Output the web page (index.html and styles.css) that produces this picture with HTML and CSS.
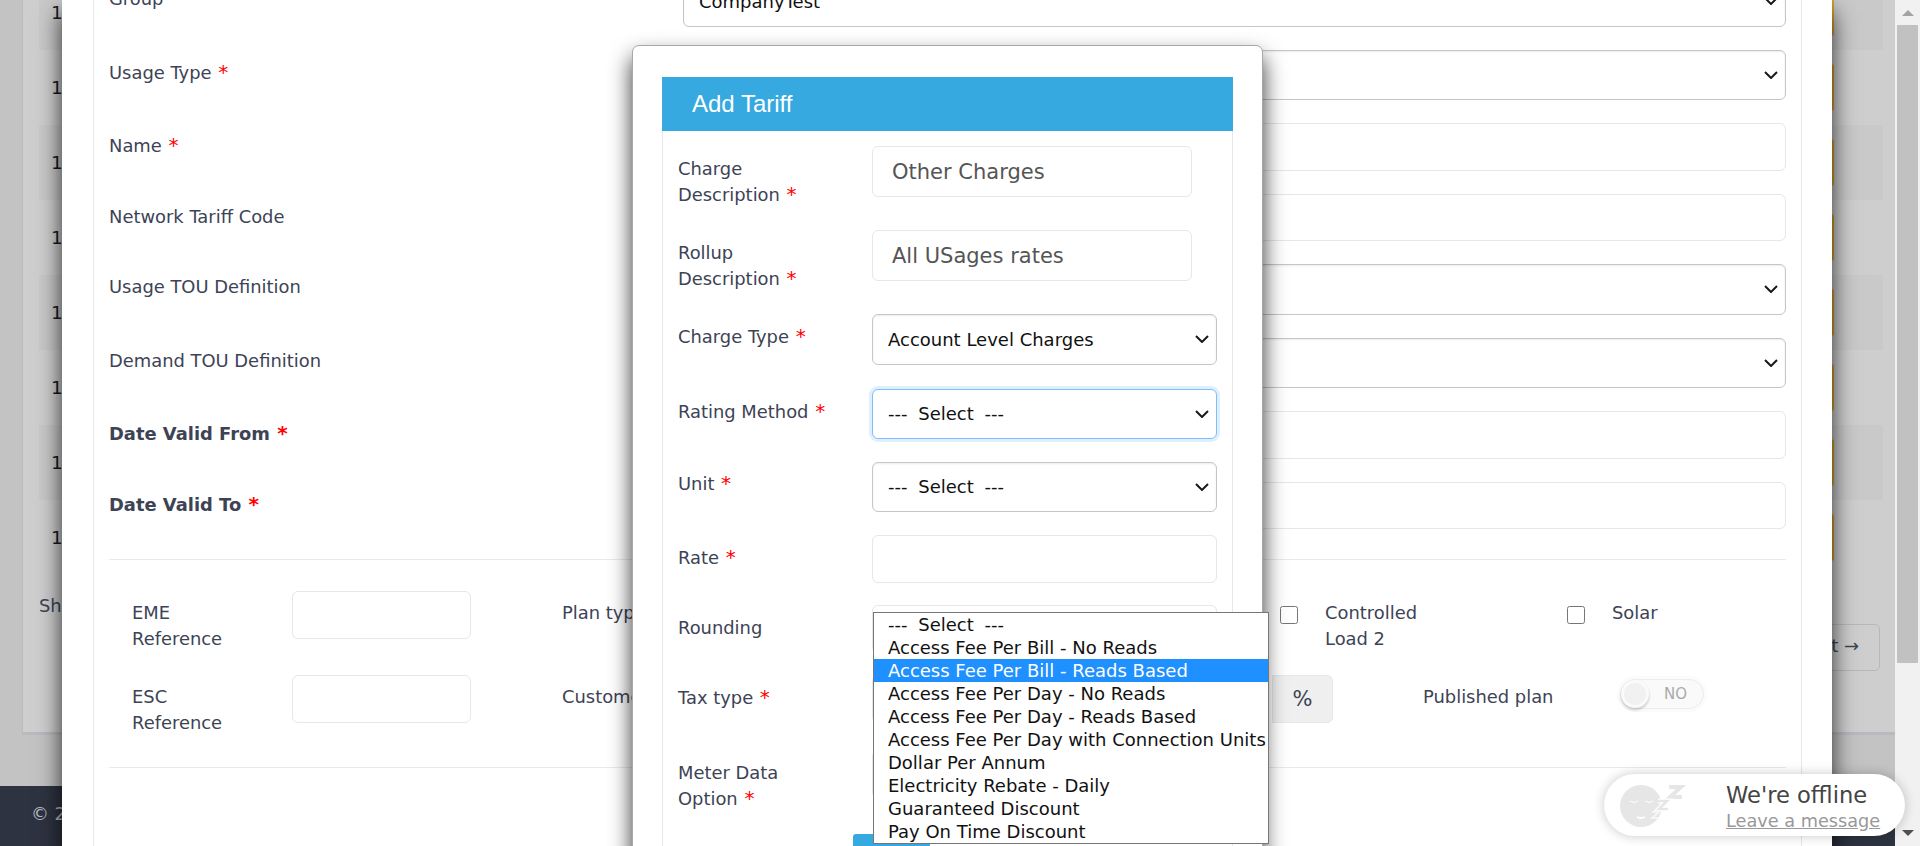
FILE: index.html
```html
<!DOCTYPE html>
<html lang="en">
<head>
<meta charset="utf-8">
<title>Add Tariff</title>
<link rel="stylesheet" href="styles.css">
</head>
<body>
<div class="page">
  <div class="main">
    <section class="bg-card">
      <div class="rows">
        <div class="row"><span class="num">19</span><span class="gold"></span></div>
        <div class="row"><span class="num">19</span><span class="gold"></span></div>
        <div class="row"><span class="num">19</span><span class="gold"></span></div>
        <div class="row"><span class="num">19</span><span class="gold"></span></div>
        <div class="row"><span class="num">19</span><span class="gold"></span></div>
        <div class="row"><span class="num">19</span><span class="gold"></span></div>
        <div class="row"><span class="num">19</span><span class="gold"></span></div>
        <div class="row"><span class="num">19</span><span class="gold"></span></div>
      </div>
      <div class="pager"><span class="showing">Showing</span><span class="next">Next →</span></div>
    </section>
    <footer class="footer">© 2021</footer>
  </div>
  <aside class="scrollbar">
    <span class="arrow-up"></span>
    <span class="thumb"></span>
    <span class="arrow-down"></span>
  </aside>

  <div class="modal">
    <div class="modal-card">
      <div class="f-row"><label class="f-label">Group</label><select class="sel"><option>CompanyTest</option></select></div>
      <div class="f-row"><label class="f-label">Usage Type <i>*</i></label><select class="sel"><option></option></select></div>
      <div class="f-row"><label class="f-label">Name <i>*</i></label><input class="inp" type="text"></div>
      <div class="f-row"><label class="f-label">Network Tariff Code</label><input class="inp" type="text"></div>
      <div class="f-row"><label class="f-label">Usage TOU Definition</label><select class="sel"><option></option></select></div>
      <div class="f-row"><label class="f-label">Demand TOU Definition</label><select class="sel"><option></option></select></div>
      <div class="f-row"><label class="f-label bold">Date Valid From <i>*</i></label><input class="inp" type="text"></div>
      <div class="f-row"><label class="f-label bold">Date Valid To <i>*</i></label><input class="inp" type="text"></div>
      <div class="opts">
        <div class="o-row">
          <label class="o-label">EME<br>Reference</label><input class="inp o-inp" type="text">
          <label class="o-wide">Plan type</label>
          <input class="chk" type="checkbox"><label class="o-chk">Controlled<br>Load 2</label>
          <input class="chk" type="checkbox"><label class="o-chk">Solar</label>
        </div>
        <div class="o-row">
          <label class="o-label">ESC<br>Reference</label><input class="inp o-inp" type="text">
          <label class="o-wide2">Customer type</label>
          <span class="addon">%</span>
          <label class="o-pub">Published plan</label>
          <span class="toggle"><span class="knob"></span><span class="no">NO</span></span>
        </div>
      </div>
    </div>
  </div>

  <div class="tariff">
    <div class="t-head">Add Tariff</div>
    <div class="t-body">
      <div class="t-row r1"><label class="t-label">Charge<br>Description <i>*</i></label><input class="inp t-short" type="text" value="Other Charges"></div>
      <div class="t-row r1"><label class="t-label">Rollup<br>Description <i>*</i></label><input class="inp t-short" type="text" value="All USages rates"></div>
      <div class="t-row r2"><label class="t-label">Charge Type <i>*</i></label><select class="sel t-sel"><option>Account Level Charges</option></select></div>
      <div class="t-row r3"><label class="t-label">Rating Method <i>*</i></label><select class="sel t-sel focus dashed"><option>--- Select ---</option></select></div>
      <div class="t-row r3b"><label class="t-label">Unit <i>*</i></label><select class="sel t-sel dashed"><option>--- Select ---</option></select></div>
      <div class="t-row r4"><label class="t-label">Rate <i>*</i></label><input class="inp t-full" type="text"></div>
      <div class="t-row r4"><label class="t-label">Rounding</label><input class="inp t-full" type="text"></div>
      <div class="t-row r4c"><label class="t-label">Tax type <i>*</i></label><input class="inp t-full" type="text"></div>
      <div class="t-row r5"><label class="t-label">Meter Data<br>Option <i>*</i></label><input class="inp t-full" type="text"></div>
      <div class="t-actions"><span class="save"></span></div>
    </div>
    <ul class="list">
      <li class="dashed">--- Select ---</li>
      <li>Access Fee Per Bill - No Reads</li>
      <li class="hi">Access Fee Per Bill - Reads Based</li>
      <li>Access Fee Per Day - No Reads</li>
      <li>Access Fee Per Day - Reads Based</li>
      <li>Access Fee Per Day with Connection Units</li>
      <li>Dollar Per Annum</li>
      <li>Electricity Rebate - Daily</li>
      <li>Guaranteed Discount</li>
      <li>Pay On Time Discount</li>
    </ul>
  </div>

  <div class="chat">
    <svg class="chat-ico" width="66" height="56" viewBox="0 0 66 56" aria-hidden="true">
      <circle cx="21" cy="27" r="21" fill="#e6e6e6"/>
      <path d="M10 22q4 3 8 0M25 22q4 3 8 0" fill="none" stroke="#fff" stroke-width="1"/>
      <path d="M17 38q4 2 8 0" fill="none" stroke="#fff" stroke-width="1.8"/>
      <path d="M49 8h12L50 18h12" fill="none" stroke="#e6e6e6" stroke-width="4"/>
      <path d="M38 22h9l-8 8h9" fill="none" stroke="#fff" stroke-width="5"/>
      <path d="M38 22h9l-8 8h9" fill="none" stroke="#e6e6e6" stroke-width="2.6"/>
      <path d="M32 33h7l-7 6h7" fill="none" stroke="#f6f6f6" stroke-width="1.8"/>
    </svg>
    <div class="chat-text">
      <div class="chat-title">We're offline</div>
      <a class="chat-link">Leave a message</a>
    </div>
  </div>
</div>
</body>
</html>
```

FILE: styles.css
```css
* { box-sizing: border-box; }
html, body { margin: 0; padding: 0; height: 846px; overflow: hidden; }
body { font-family: "DejaVu Sans", sans-serif; font-size: 17.9px; color: #3d4355; }

.page { position: relative; display: flex; width: 1920px; height: 846px; overflow: hidden; background: #c3c3c3; }
.main { flex: 1; display: flex; flex-direction: column; min-width: 0; }

.bg-card { height: 735px; margin-left: 22px; padding: 0 12px 0 16px; background: #cecece; border-left: 1px solid #bcbcbc; border-bottom: 3px solid #b9b9c0; overflow: hidden; }
.rows { margin-top: -25px; }
.row { display: flex; align-items: center; height: 75px; padding-left: 12px; }
.row:nth-child(odd) { background: #c9c9c9; }
.num { color: #181a20; font-size: 18.5px; }
.gold { width: 44px; height: 47px; margin-left: auto; margin-right: 49px; background: #d8a32c; border-radius: 3px; }
.pager { display: flex; justify-content: space-between; align-items: flex-start; }
.showing { margin-top: 20px; }
.next { margin-top: 49px; margin-right: 3px; padding: 10px 20px; height: 47px; border: 1px solid #b8b8b8; border-radius: 5px; }

.footer { flex: 1; margin-top: 51px; padding: 17px 31px; background: #2d3340; color: #b9bcc2; }

.scrollbar { width: 25px; display: flex; flex-direction: column; align-items: center; background: #f1f1f1; }
.arrow-up { margin-top: 10px; border: 6px solid transparent; border-top: 0; border-bottom-color: #a3a3a3; }
.thumb { width: 21px; height: 638px; margin-top: 9px; background: #c1c1c1; }
.arrow-down { margin-top: 167px; border: 6px solid transparent; border-bottom: 0; border-top-color: #505050; }

.modal { position: absolute; left: 62px; top: 0; width: 1770px; height: 846px; background: #fff; box-shadow: 0 12px 22px rgba(0,0,0,.8); overflow: hidden; }
.modal-card { width: 1709px; height: 880px; margin-left: 31px; margin-top: -24px; padding: 0 15px; border: 0 solid #e6e6ee; border-width: 0 1px; }

.f-row { display: grid; grid-template-columns: 574px 1fr; margin-bottom: 23px; }
.f-label { padding-top: 10px; line-height: 26px; }
.bold { font-weight: 700; }
i { font-style: normal; font-size: 20px; line-height: 20px; color: #f00; margin-left: 1px; }

.sel { display: block; width: 100%; height: 50.5px; padding: 0 36px 0 15px; appearance: none; -webkit-appearance: none; background: #fff url("data:image/svg+xml,%3Csvg xmlns='http://www.w3.org/2000/svg' width='14' height='8' viewBox='0 0 14 8'%3E%3Cpath d='M1 1l6 6 6-6' fill='none' stroke='%23191919' stroke-width='2'/%3E%3C/svg%3E") no-repeat right 7px center; border: 1px solid #c6c6c6; border-radius: 6px; font-family: "DejaVu Sans", sans-serif; font-size: 18px; color: #111; box-shadow: inset 0 1px 2px rgba(0,0,0,.08); }
.inp { display: block; width: 100%; height: 47.5px; padding: 1px 19px 0; background: #fff; border: 1px solid #e6e6ee; border-radius: 6px; font-family: "DejaVu Sans", sans-serif; font-size: 21px; color: #555; }
.dashed { word-spacing: 5px; }

.opts { margin-top: 30px; padding: 31px 0 8px 23px; border: 0 solid #e9e9ef; border-width: 1px 0; }
.o-row { display: flex; align-items: flex-start; height: 84px; }
.o-label { flex: none; width: 160px; padding-top: 9px; line-height: 26px; }
.o-inp { flex: none; width: 179px; height: 48px; margin-right: 91px; }
.o-wide { flex: none; width: 718px; padding-top: 9px; line-height: 26px; }
.o-wide2 { flex: none; width: 710px; padding-top: 9px; line-height: 26px; }
.chk { flex: none; width: 18px; height: 18px; margin: 15px 27px 0 0; }
.o-chk { flex: none; width: 242px; padding-top: 9px; line-height: 26px; }
.addon { flex: none; display: flex; align-items: center; justify-content: center; width: 61px; height: 48px; background: #efefef; border: 1px solid #e6e6ee; border-radius: 0 6px 6px 0; font-size: 21px; }
.o-pub { flex: none; width: 197px; margin-left: 90px; padding-top: 9px; line-height: 26px; }
.toggle { flex: none; position: relative; display: flex; align-items: center; justify-content: flex-end; width: 84px; height: 30px; margin-top: 4px; padding-right: 16px; background: #fafafa; border: 1px solid #ececec; border-radius: 15px; box-shadow: 0 0 0 3px #fbfbfb; }
.knob { position: absolute; left: 0; top: 0; width: 28px; height: 28px; border-radius: 50%; background: #f1f1f1; border: 3px solid #fafafa; box-shadow: 0 2px 3px rgba(0,0,0,.2); }
.no { font-size: 15px; color: #aaa; }

.tariff { position: absolute; left: 632px; top: 45px; width: 631px; height: 830px; padding: 31px 29px 0; background: #fff; border: 1px solid #a8a8a8; border-radius: 7px; box-shadow: 0 12px 22px rgba(0,0,0,.8); }
.t-head { height: 54px; padding-left: 30px; background: #36a9e1; color: #fff; font-family: "Liberation Sans", sans-serif; font-size: 24px; line-height: 53px; }
.t-body { height: 800px; padding: 15px 15px 0; border: 0 solid #e6e6ee; border-width: 0 1px; }
.t-row { display: grid; grid-template-columns: 194px 345px; align-items: start; }
.t-label { padding-top: 9.5px; line-height: 26px; white-space: nowrap; }
.r1 { height: 84px; }
.r2 { height: 75px; }
.r3 { height: 72.5px; }
.r3b { height: 73.5px; }
.r4 { height: 70px; }
.r4c { height: 75px; }
.r5 { height: 84px; }
.t-short { width: 320px; height: 51px; }
.t-full { height: 48px; }
.focus { height: 49.5px; border-color: #80bdff; box-shadow: 0 0 0 3px rgba(0,123,255,.12); }
.t-actions { padding-left: 175px; }
.save { display: block; width: 77px; height: 40px; background: #36a9e1; border-radius: 3px; }

.list { position: absolute; left: 240px; top: 566px; width: 396px; margin: 0; padding: 0; list-style: none; background: #fff; border: 1px solid #767676; color: #111; font-size: 18px; line-height: 23px; }
.list li { height: 23px; padding-left: 14px; white-space: nowrap; }
.list .hi { background: #1e90ff; color: #fff; }

.chat { position: absolute; left: 1604px; top: 774px; width: 301px; height: 62px; display: flex; padding-left: 16px; background: #fff; border-radius: 31px; box-shadow: 0 0 12px rgba(0,0,0,.22); }
.chat-ico { margin-top: 5px; flex: none; }
.chat-text { margin-left: 40px; padding-top: 6px; }
.chat-title { font-size: 22.6px; line-height: 30px; color: #444; }
.chat-link { display: block; font-size: 17.7px; line-height: 22px; color: #999; text-decoration: underline; }
```
